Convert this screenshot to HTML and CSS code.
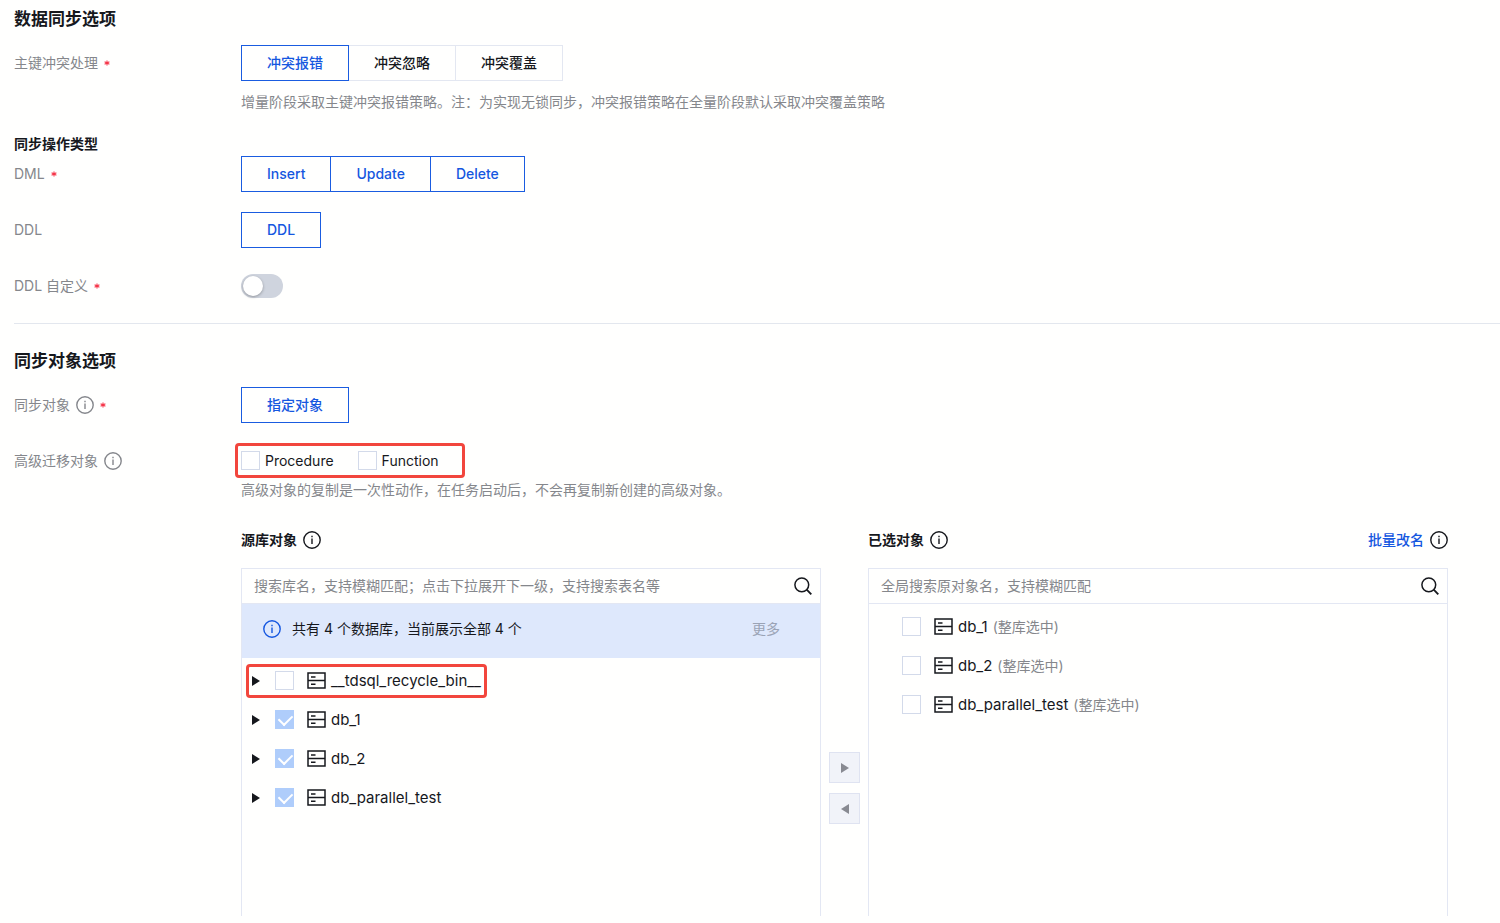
FILE: index.html
```html
<!DOCTYPE html>
<html lang="zh-CN">
<head>
    <meta charset="UTF-8">
    <meta name="viewport" content="width=device-width, initial-scale=1.0">
    <title>数据同步选项</title>
    <link rel="stylesheet" href="styles.css">
</head>
<body>
    <svg class="sprite" aria-hidden="true">
        <symbol id="i-info" viewBox="0 0 18 18">
            <circle cx="9" cy="9" r="8.2" fill="none" stroke="currentColor" stroke-width="1.4"/>
            <path d="M9 7.6V13M9 4.8v1.5" fill="none" stroke="currentColor" stroke-width="1.4"/>
        </symbol>
        <symbol id="i-star" viewBox="0 0 6 6">
            <path d="M3 .4v5.2M.6 1.7l4.8 2.6M5.4 1.7L.6 4.3" fill="none" stroke="currentColor" stroke-width="1.1"/>
        </symbol>
        <symbol id="i-search" viewBox="0 0 18 18">
            <circle cx="7.8" cy="7.8" r="6.9" fill="none" stroke="currentColor" stroke-width="1.5"/>
            <path d="M12.7 12.7l4.6 4.6" fill="none" stroke="currentColor" stroke-width="1.9"/>
        </symbol>
        <symbol id="i-db" viewBox="0 0 19 17">
            <path d="M1 1h17v15H1zM1 8.5h17M4 5h4.5M4 12.2h4.5" fill="none" stroke="currentColor" stroke-width="1.5"/>
        </symbol>
        <symbol id="i-right" viewBox="0 0 8 10">
            <path d="M0 0l8 5-8 5z" fill="currentColor"/>
        </symbol>
        <symbol id="i-left" viewBox="0 0 8 10">
            <path d="M8 0L0 5l8 5z" fill="currentColor"/>
        </symbol>
    </svg>

    <main class="page">
        <section>
            <h2>数据同步选项</h2>
            <div class="row">
                <div class="label">主键冲突处理<svg class="star"><use href="#i-star"/></svg></div>
                <div>
                    <div class="segment">
                        <button type="button" class="active">冲突报错</button>
                        <button type="button">冲突忽略</button>
                        <button type="button">冲突覆盖</button>
                    </div>
                    <p class="hint spaced">增量阶段采取主键冲突报错策略。注：为实现无锁同步，冲突报错策略在全量阶段默认采取冲突覆盖策略</p>
                </div>
            </div>
            <h3>同步操作类型</h3>
            <div class="row">
                <div class="label">DML<svg class="star"><use href="#i-star"/></svg></div>
                <div class="segment">
                    <button type="button" class="active">Insert</button>
                    <button type="button" class="active">Update</button>
                    <button type="button" class="active">Delete</button>
                </div>
            </div>
            <div class="row">
                <div class="label">DDL</div>
                <div class="segment">
                    <button type="button" class="active">DDL</button>
                </div>
            </div>
            <div class="row">
                <label class="label" for="customDdl">DDL 自定义<svg class="star"><use href="#i-star"/></svg></label>
                <div class="switch-wrap">
                    <input type="checkbox" class="switch" id="customDdl">
                </div>
            </div>
        </section>

        <section class="objects">
            <h2>同步对象选项</h2>
            <div class="row">
                <div class="label">同步对象<svg class="info"><use href="#i-info"/></svg><svg class="star"><use href="#i-star"/></svg></div>
                <div class="segment">
                    <button type="button" class="active">指定对象</button>
                </div>
            </div>
            <div class="row">
                <div class="label">高级迁移对象<svg class="info"><use href="#i-info"/></svg></div>
                <div>
                    <div class="advanced marked">
                        <label><input type="checkbox" class="check">Procedure</label>
                        <label><input type="checkbox" class="check">Function</label>
                    </div>
                    <p class="hint">高级对象的复制是一次性动作，在任务启动后，不会再复制新创建的高级对象。</p>

                    <div class="transfer">
                        <div class="side">
                            <div class="side-title">
                                <h3>源库对象</h3>
                                <svg class="info"><use href="#i-info"/></svg>
                            </div>
                            <div class="panel">
                                <div class="search">
                                    <input type="text" aria-label="搜索库名" placeholder="搜索库名，支持模糊匹配；点击下拉展开下一级，支持搜索表名等">
                                    <button type="button" aria-label="搜索"><svg><use href="#i-search"/></svg></button>
                                </div>
                                <div class="notice">
                                    <svg class="info"><use href="#i-info"/></svg>
                                    <span>共有 4 个数据库，当前展示全部 4 个</span>
                                    <button type="button" disabled>更多</button>
                                </div>
                                <ul class="tree">
                                    <li>
                                        <div class="node marked">
                                            <button type="button" class="arrow" aria-label="展开"><svg><use href="#i-right"/></svg></button>
                                            <label><input type="checkbox" class="check"><svg class="db"><use href="#i-db"/></svg>__tdsql_recycle_bin__</label>
                                        </div>
                                    </li>
                                    <li>
                                        <div class="node">
                                            <button type="button" class="arrow" aria-label="展开"><svg><use href="#i-right"/></svg></button>
                                            <label><input type="checkbox" class="check" checked disabled><svg class="db"><use href="#i-db"/></svg>db_1</label>
                                        </div>
                                    </li>
                                    <li>
                                        <div class="node">
                                            <button type="button" class="arrow" aria-label="展开"><svg><use href="#i-right"/></svg></button>
                                            <label><input type="checkbox" class="check" checked disabled><svg class="db"><use href="#i-db"/></svg>db_2</label>
                                        </div>
                                    </li>
                                    <li>
                                        <div class="node">
                                            <button type="button" class="arrow" aria-label="展开"><svg><use href="#i-right"/></svg></button>
                                            <label><input type="checkbox" class="check" checked disabled><svg class="db"><use href="#i-db"/></svg>db_parallel_test</label>
                                        </div>
                                    </li>
                                </ul>
                            </div>
                        </div>

                        <div class="moves">
                            <button type="button" disabled aria-label="添加"><svg><use href="#i-right"/></svg></button>
                            <button type="button" disabled aria-label="移除"><svg><use href="#i-left"/></svg></button>
                        </div>

                        <div class="side">
                            <div class="side-title">
                                <h3>已选对象</h3>
                                <svg class="info"><use href="#i-info"/></svg>
                                <a href="#">批量改名</a>
                                <svg class="info"><use href="#i-info"/></svg>
                            </div>
                            <div class="panel">
                                <div class="search">
                                    <input type="text" aria-label="搜索原对象名" placeholder="全局搜索原对象名，支持模糊匹配">
                                    <button type="button" aria-label="搜索"><svg><use href="#i-search"/></svg></button>
                                </div>
                                <ul class="tree selected">
                                    <li><label><input type="checkbox" class="check"><svg class="db"><use href="#i-db"/></svg>db_1<span>(整库选中)</span></label></li>
                                    <li><label><input type="checkbox" class="check"><svg class="db"><use href="#i-db"/></svg>db_2<span>(整库选中)</span></label></li>
                                    <li><label><input type="checkbox" class="check"><svg class="db"><use href="#i-db"/></svg>db_parallel_test<span>(整库选中)</span></label></li>
                                </ul>
                            </div>
                        </div>
                    </div>
                </div>
            </div>
        </section>
    </main>
</body>
</html>
```
FILE: styles.css
```css
* {
    box-sizing: border-box;
}
body {
    margin: 0;
    background-color: #fffffe;
    color: #16181d;
    font-family: Inter, "Noto Sans CJK SC", sans-serif;
    font-size: 14px;
    line-height: 24px;
}
h2, h3, p, ul {
    margin: 0;
    padding: 0;
}
h2 {
    margin-bottom: 14px;
    font-size: 17px;
    font-weight: 600;
}
h3 {
    font-size: 14px;
    font-weight: 600;
}
button {
    margin: 0;
    padding: 0;
    border: 0;
    background: none;
    color: inherit;
    font: inherit;
    cursor: pointer;
}
svg {
    display: block;
    flex: none;
}
.sprite {
    position: absolute;
    width: 0;
    height: 0;
}
.page {
    padding: 7px 0 7px 14px;
}
.row {
    display: grid;
    grid-template-columns: 227px minmax(0, 1fr);
}
.row + .row {
    margin-top: 20px;
}
.row + h3 {
    margin-top: 18px;
}
.label {
    display: flex;
    align-items: center;
    height: 36px;
    color: #85878c;
}
.star {
    width: 6px;
    height: 6px;
    margin-left: 6px;
    color: #f5364a;
}
.info {
    width: 18px;
    height: 18px;
}
.label .info {
    margin-left: 6px;
}
.hint {
    color: #85878c;
}
.hint.spaced {
    margin-top: 9px;
}

.segment {
    display: flex;
}
.segment button {
    height: 36px;
    padding: 0 25px;
    border: 1px solid #e3e7f1;
    font-weight: 500;
}
.segment button + button {
    margin-left: -1px;
}
.segment .active {
    position: relative;
    border-color: #1a5ce0;
    color: #1557e0;
}

.switch-wrap {
    display: flex;
    align-items: center;
    height: 36px;
}
.switch {
    appearance: none;
    width: 42px;
    height: 24px;
    margin: 0;
    padding: 2px;
    border-radius: 12px;
    background: #cfd4de;
}
.switch::before {
    content: "";
    display: block;
    width: 20px;
    height: 20px;
    border-radius: 50%;
    background: #fff;
    box-shadow: 0 1px 3px rgba(0, 0, 0, 0.3);
}
.switch:checked {
    background: #1557e0;
}
.switch:checked::before {
    margin-left: 18px;
}

.objects {
    margin-top: 19px;
    padding-top: 25px;
    border-top: 1px solid #e3e7ee;
}
.check {
    appearance: none;
    flex: none;
    width: 19px;
    height: 19px;
    margin: 0;
    border: 1px solid #d3daea;
    background: #fff;
}
.check:checked {
    border-color: #afcdfb;
    background: #afcdfb;
}
.check:checked::before {
    content: "";
    display: block;
    width: 11px;
    height: 7px;
    margin: 3px;
    border: solid #fff;
    border-width: 0 0 2px 2px;
    transform: rotate(-45deg);
}
.marked {
    border-radius: 4px;
    outline: 3px solid #f2463d;
    outline-offset: -3px;
}
.advanced {
    display: flex;
    align-items: center;
    gap: 24px;
    width: 230px;
    height: 35px;
    margin-left: -6px;
    padding: 0 6px;
}
.advanced label {
    display: flex;
    align-items: center;
    gap: 5px;
}

.transfer {
    display: grid;
    grid-template-columns: minmax(0, 1fr) 47px minmax(0, 1fr);
    margin: 26px 52px 0 0;
}
.side-title {
    display: flex;
    align-items: center;
    gap: 6px;
    margin-bottom: 16px;
}
.side-title a {
    margin-left: auto;
    color: #1557e0;
    font-weight: 500;
    text-decoration: none;
}
.panel {
    min-height: 348px;
    border: 1px solid #e3e7f3;
    border-bottom: 0;
}
.search {
    display: flex;
    align-items: center;
    height: 35px;
    padding: 0 8px 0 12px;
    border-bottom: 1px solid #e3e7f3;
}
.search input {
    flex: 1;
    min-width: 0;
    padding: 0;
    border: 0;
    outline: 0;
    background: none;
    color: inherit;
    font: inherit;
}
.search input::placeholder {
    color: #85878c;
    opacity: 1;
}
.search svg {
    width: 18px;
    height: 18px;
}
.notice {
    display: flex;
    align-items: center;
    gap: 11px;
    height: 54px;
    padding: 0 40px 4px 21px;
    background: #dee8fc;
}
.notice .info {
    color: #1557e0;
}
.notice button {
    margin-left: auto;
    color: #9aa3b5;
}
.tree {
    padding: 3px 4px;
    font-size: 15px;
    list-style: none;
}
.tree li {
    display: flex;
    align-items: center;
    height: 39px;
}
.tree label {
    display: flex;
    align-items: center;
}
.node {
    display: flex;
    align-items: center;
    gap: 15px;
    height: 34px;
    padding: 0 6px;
}
.arrow svg {
    width: 8px;
    height: 10px;
}
.db {
    width: 19px;
    height: 17px;
    margin: 0 5px 0 13px;
}
.selected {
    padding-left: 33px;
}
.selected span {
    margin-left: 5px;
    color: #85878c;
    font-size: 14px;
}
.moves {
    display: flex;
    flex-direction: column;
    align-items: center;
    gap: 10px;
    padding-top: 224px;
}
.moves button {
    display: flex;
    align-items: center;
    justify-content: center;
    width: 31px;
    height: 31px;
    border: 1px solid #dfe3f1;
    background: #f1f3f9;
    color: #888a92;
}
.moves svg {
    width: 8px;
    height: 10px;
}
```
